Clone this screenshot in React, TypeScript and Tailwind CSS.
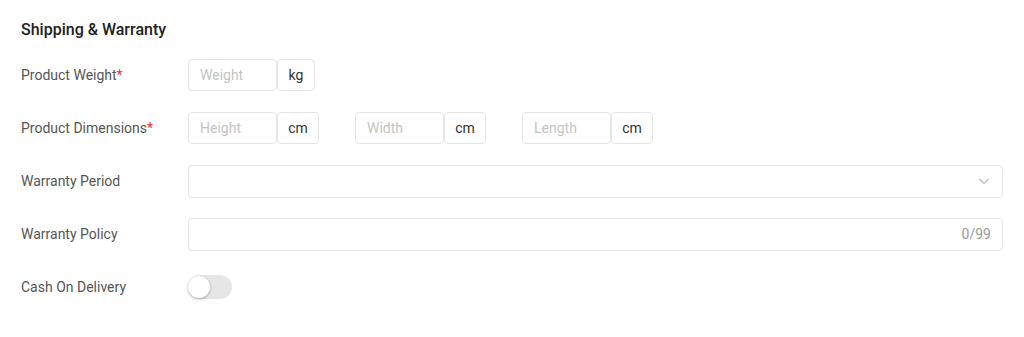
import React from "react";

function UnitInput({ placeholder, unit }: { placeholder: string; unit: string }) {
  return (
    <div className="flex h-8">
      <input
        placeholder={placeholder}
        className="w-[89px] h-8 rounded-[4px] border border-[#e5e5e5] px-[11px] text-[14px] text-[#333] placeholder:text-[#c4c4c4] outline-none"
      />
      <div
        className={
          "h-8 flex items-center justify-center rounded-[4px] border border-[#e5e5e5] text-[14px] text-[#333] " +
          (unit === "kg" ? "w-[38px]" : "w-[42px]")
        }
      >
        {unit}
      </div>
    </div>
  );
}

function Row({ label, required, children }: { label: string; required?: boolean; children: React.ReactNode }) {
  return (
    <div className="flex items-center h-8">
      <div className="w-[167px] text-[14px] text-[#555]">
        {label}
        {required && <span className="text-[#ee2d2d]">*</span>}
      </div>
      {children}
    </div>
  );
}

export default function App() {
  return (
    <div
      className="w-[1024px] h-[337px] bg-white pl-[21px] pr-[21px] pt-[19px]"
      style={{ fontFamily: "Roboto, 'Liberation Sans', sans-serif" }}
    >
      <h2 className="text-[16px] font-medium text-[#222] leading-[22px] mb-[18px]">Shipping &amp; Warranty</h2>
      <div className="flex flex-col gap-[21px]">
        <Row label="Product Weight" required>
          <UnitInput placeholder="Weight" unit="kg" />
        </Row>
        <Row label="Product Dimensions" required>
          <div className="flex gap-[36px]">
            <UnitInput placeholder="Height" unit="cm" />
            <UnitInput placeholder="Width" unit="cm" />
            <UnitInput placeholder="Length" unit="cm" />
          </div>
        </Row>
        <Row label="Warranty Period">
          <div className="flex-1 h-[33px] rounded-[4px] border border-[#e5e5e5] flex items-center justify-end pr-[12px]">
            <svg width="12" height="12" viewBox="0 0 12 12" fill="none" stroke="#b7b7b7" strokeWidth="1.1">
              <path d="M1.5 4l4.5 4.5L10.5 4" />
            </svg>
          </div>
        </Row>
        <Row label="Warranty Policy">
          <div className="flex-1 h-[33px] rounded-[4px] border border-[#e5e5e5] flex items-center justify-end pr-[11px] text-[14px] text-[#999]">
            0/99
          </div>
        </Row>
        <Row label="Cash On Delivery">
          <div className="relative w-[44px] h-[24px] rounded-full bg-[#e6e6e6]">
            <div className="absolute left-0 top-px w-[22px] h-[22px] rounded-full bg-white shadow-[0_1px_3px_rgba(0,0,0,0.3)]" />
          </div>
        </Row>
      </div>
    </div>
  );
}
